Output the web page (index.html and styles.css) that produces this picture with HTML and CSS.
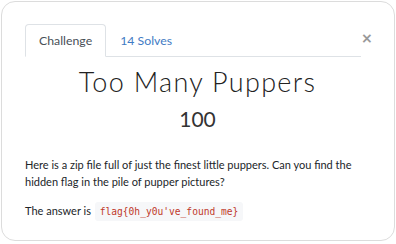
FILE: index.html
```html
<!DOCTYPE html>
<html>
<head>
    <title>Too Many Puppers</title>
    <link rel="stylesheet" href="styles.css">
</head>
<body>

<div class="modal">
    <div class="modal-head">
        <ul class="tabs">
            <li class="tab active">Challenge</li>
            <li class="tab">14 Solves</li>
        </ul>
        <button class="close">&times;</button>
    </div>

    <h1 class="title">Too Many Puppers</h1>
    <div class="points">100</div>

    <p class="desc">Here is a zip file full of just the finest little puppers. Can you find the hidden flag in the pile of pupper pictures?</p>
    <p class="desc">The answer is <code>flag{0h_y0u've_found_me}</code></p>
</div>

</body>
</html>
```
FILE: styles.css
```css
body {
    margin: 0;
    padding: 1px;
    background: #fff;
    font-family: Lato, 'Noto Sans', sans-serif;
    color: #212529;
}

.modal {
    height: 240px;
    box-sizing: border-box;
    border: 1px solid #dcdcdc;
    border-radius: 14px;
    padding: 22px 24px 0 23px;
}

.modal-head {
    display: flex;
    align-items: flex-start;
}

.tabs {
    flex: 1;
    display: flex;
    margin: 0;
    padding: 0;
    list-style: none;
    border-bottom: 1px solid #dee2e6;
}

.tab {
    font-size: 12.3px;
    line-height: 14px;
    padding: 9px 13px 8px;
    color: #3f7bc4;
    border: 1px solid transparent;
    border-radius: 4px 4px 0 0;
    margin-bottom: -1px;
}

.tab.active {
    color: #495057;
    border-color: #dee2e6 #dee2e6 #fff;
    background: #fff;
}

.close {
    background: none;
    border: 0;
    padding: 0;
    margin: 7px 0 0 0;
    width: 9px;
    font-family: 'DejaVu Sans', sans-serif;
    font-size: 14px;
    font-weight: bold;
    line-height: 1;
    color: #999;
}

.title {
    margin: 9px 0 0;
    text-align: center;
    font-weight: 300;
    font-size: 27px;
    letter-spacing: 1.3px;
    line-height: 32px;
    color: #222;
}

.points {
    margin-top: 9px;
    text-align: center;
    font-size: 21px;
    line-height: 24px;
    color: #333;
}

.desc {
    margin: 0 0 13px;
    font-size: 11px;
    line-height: 16.5px;
}

.points + .desc {
    margin-top: 26px;
}

code {
    font-family: 'DejaVu Sans Mono', monospace;
    font-size: 9.6px;
    color: #c0392b;
    background: #f6f7f9;
    padding: 4px 5px;
    border-radius: 3px;
    margin-left: 1px;
}
```
